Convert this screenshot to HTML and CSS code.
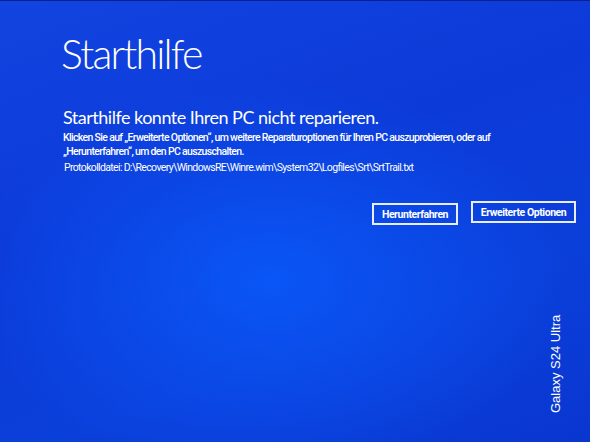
FILE: index.html
```html
<!DOCTYPE html>
<html lang="de">
<head>
<meta charset="utf-8">
<title>Starthilfe</title>
<link rel="stylesheet" href="styles.css">
</head>
<body>
<div class="screen">
  <main class="content">
    <h1 class="title">Starthilfe</h1>
    <h2 class="subtitle">Starthilfe konnte Ihren PC nicht reparieren.</h2>
    <p class="msg">Klicken Sie auf „Erweiterte Optionen“, um weitere Reparaturoptionen für Ihren PC auszuprobieren, oder auf<br>„Herunterfahren“, um den PC auszuschalten.</p>
    <p class="log">Protokolldatei: D:\Recovery\WindowsRE\Winre.wim\System32\Logfiles\Srt\SrtTrail.txt</p>
    <div class="actions">
      <button class="btn btn-shutdown">Herunterfahren</button>
      <button class="btn btn-advanced">Erweiterte Optionen</button>
    </div>
  </main>
  <div class="watermark">Galaxy S24 Ultra</div>
</div>
</body>
</html>
```
FILE: styles.css
```css
html, body {
  margin: 0;
  padding: 0;
}
body {
  width: 590px;
  height: 442px;
  overflow: hidden;
  font-family: Lato, "Open Sans", sans-serif;
  color: #ffffff;
}
.screen {
  position: relative;
  width: 590px;
  height: 442px;
  background:
    radial-gradient(ellipse 300px 200px at 270px 280px, #0a56f6 0%, rgba(10, 80, 240, 0) 100%),
    linear-gradient(160deg, #1244e0 0%, #0c3ad8 40%, #0b3fda 70%, #0a36d0 100%);
  box-shadow: inset 0 1px 0 #0a1f90;
}
.content {
  display: flex;
  flex-direction: column;
  padding: 28px 0 0 61px;
}
.title {
  margin: 0;
  font-weight: 300;
  font-size: 41px;
  line-height: 52px;
  letter-spacing: -1.8px;
}
.subtitle {
  margin: 26px 0 0 2px;
  font-weight: 400;
  font-size: 18px;
  line-height: 22px;
  letter-spacing: -0.5px;
}
.msg {
  margin: 3px 0 0 2px;
  font-family: Roboto, sans-serif;
  font-weight: 500;
  font-size: 10.5px;
  line-height: 14px;
  letter-spacing: -0.67px;
}
.log {
  margin: 2px 0 0 3px;
  font-family: Roboto, sans-serif;
  font-weight: 400;
  font-size: 10.5px;
  line-height: 14px;
  letter-spacing: -0.65px;
}
.actions {
  display: flex;
  justify-content: flex-end;
  align-items: flex-start;
  gap: 13px;
  margin: 26px 14px 0 0;
}
.btn {
  background: transparent;
  border: 2px solid #e8eeff;
  color: #ffffff;
  font-family: Roboto, sans-serif;
  font-weight: 700;
  font-size: 10.5px;
  letter-spacing: -0.45px;
  white-space: nowrap;
  height: 22px;
  padding: 0;
  margin: 0;
}
.btn-shutdown {
  width: 86px;
  margin-top: 2px;
}
.btn-advanced {
  width: 105px;
}
.watermark {
  position: absolute;
  left: 548px;
  top: 413px;
  transform: rotate(-90deg);
  transform-origin: 0 0;
  font-family: "Liberation Sans", Arial, sans-serif;
  font-size: 13px;
  line-height: 15px;
  white-space: nowrap;
  color: #ffffff;
}
```
